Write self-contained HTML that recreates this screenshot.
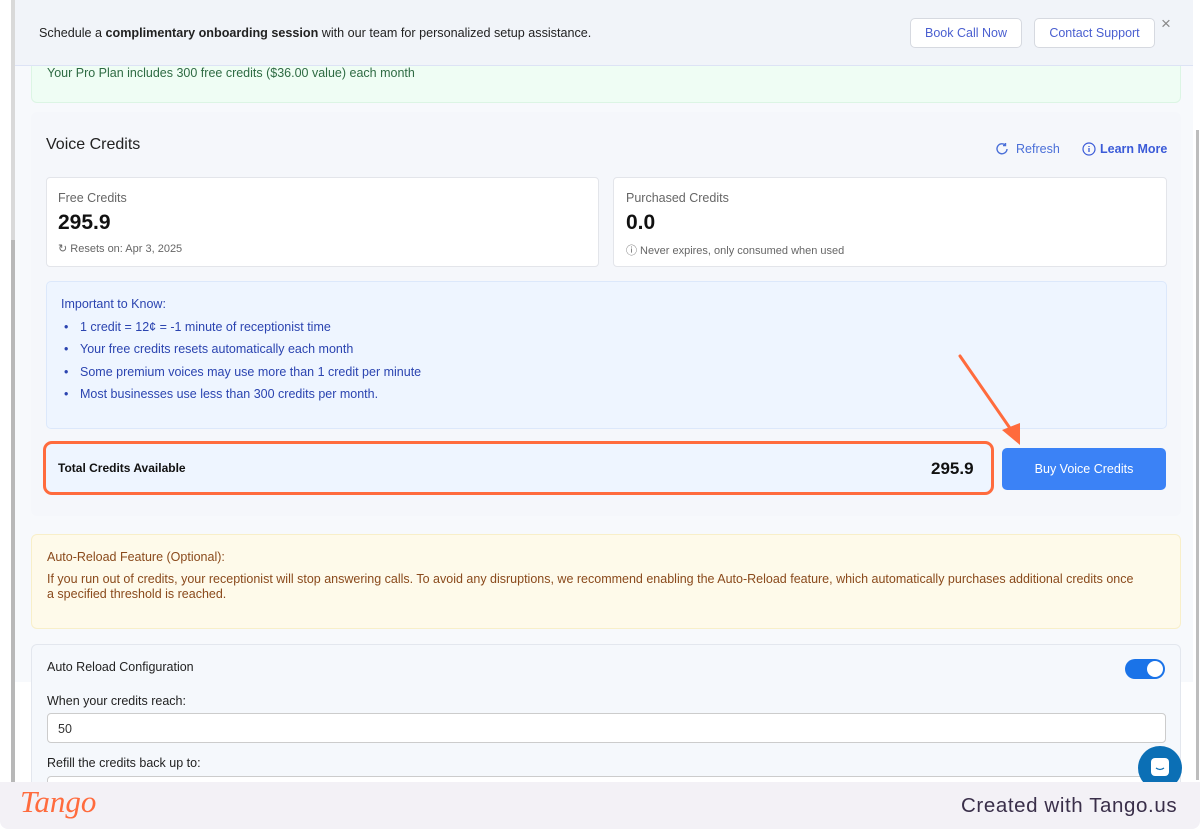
<!DOCTYPE html>
<html><head><meta charset="utf-8">
<style>
*{box-sizing:border-box;margin:0;padding:0}
body{width:1200px;height:829px;overflow:hidden;background:#fff;font-family:"Liberation Sans",sans-serif;position:relative}
.a{position:absolute}
.t{font-size:12.5px}
</style></head><body>
<div class="a" style="left:0;top:0;width:1200px;height:782px;background:#f7f9fc"></div>
<div class="a" style="left:0;top:0;width:11px;height:782px;background:#fff"></div>
<div class="a" style="left:11px;top:0;width:4px;height:782px;background:#d9d9d9"></div>
<div class="a" style="left:11px;top:240px;width:4px;height:542px;background:#b8b8b8"></div>
<div class="a" style="left:1193px;top:0;width:7px;height:782px;background:#fff"></div>
<div class="a" style="left:1196px;top:130px;width:3px;height:650px;background:#bdbdbd"></div>
<div class="a" style="left:15px;top:682px;width:1178px;height:100px;background:#fff"></div>

<div class="a" style="left:31px;top:50px;width:1150px;height:53px;background:#effdf4;border:1px solid #dcf5e4;border-radius:6px"></div>
<div class="a t" style="left:47px;top:66px;color:#2e6b43">Your Pro Plan includes 300 free credits ($36.00 value) each month</div>

<div class="a" style="left:15px;top:0;width:1178px;height:66px;background:#f1f4f9;border-bottom:1px solid #dde3f5"></div>
<div class="a" style="left:39px;top:26px;font-size:12.6px;color:#222">Schedule a <b>complimentary onboarding session</b> with our team for personalized setup assistance.</div>
<div class="a" style="left:910px;top:18px;width:112px;height:30px;background:#fff;border:1px solid #d6d9e0;border-radius:5px;font-size:12.5px;color:#4a5fd0;text-align:center;line-height:29px">Book Call Now</div>
<div class="a" style="left:1034px;top:18px;width:121px;height:30px;background:#fff;border:1px solid #d6d9e0;border-radius:5px;font-size:12.5px;color:#4a5fd0;text-align:center;line-height:29px">Contact Support</div>
<div class="a" style="left:1161px;top:14px;font-size:17px;color:#888">×</div>

<div class="a" style="left:31px;top:112px;width:1150px;height:404px;background:#f5f7fb;border-radius:6px"></div>
<div class="a" style="left:46px;top:136px;font-size:16px;color:#222">Voice Credits</div>
<svg class="a" style="left:995px;top:142px" width="14" height="14" viewBox="0 0 14 14"><path d="M12 7A5 5 0 1 1 10.5 3.2" fill="none" stroke="#4a6fd8" stroke-width="1.4"/><path d="M10.5 1v2.6H8" fill="none" stroke="#4a6fd8" stroke-width="1.4"/></svg>
<div class="a" style="left:1016px;top:142px;font-size:12.5px;color:#4a6fd8">Refresh</div>
<svg class="a" style="left:1082px;top:142px" width="14" height="14" viewBox="0 0 14 14"><circle cx="7" cy="7" r="6" fill="none" stroke="#3b5bd8" stroke-width="1.2"/><path d="M7 6v4M7 4v1" stroke="#3b5bd8" stroke-width="1.3"/></svg>
<div class="a" style="left:1100px;top:142px;font-size:12.5px;color:#3b5bd8;font-weight:bold">Learn More</div>

<div class="a" style="left:46px;top:177px;width:553px;height:90px;background:#fff;border:1px solid #e3e5ea;border-radius:4px"></div>
<div class="a t" style="left:58px;top:191px;color:#666">Free Credits</div>
<div class="a" style="left:58px;top:211px;font-size:21px;font-weight:bold;color:#111">295.9</div>
<div class="a" style="left:58px;top:242px;font-size:11px;color:#666">↻ Resets on: Apr 3, 2025</div>
<div class="a" style="left:613px;top:177px;width:554px;height:90px;background:#fff;border:1px solid #e3e5ea;border-radius:4px"></div>
<div class="a t" style="left:626px;top:191px;color:#666">Purchased Credits</div>
<div class="a" style="left:626px;top:211px;font-size:21px;font-weight:bold;color:#111">0.0</div>
<div class="a" style="left:626px;top:242px;font-size:11px;color:#666">ⓘ Never expires, only consumed when used</div>

<div class="a" style="left:46px;top:281px;width:1121px;height:148px;background:#eef5ff;border:1px solid #dce8fb;border-radius:5px"></div>
<div class="a" style="left:61px;top:297px;font-size:12.5px;color:#2b44b0">Important to Know:</div>
<div class="a t" style="left:64px;top:316px;color:#2b44b0;line-height:22.3px">
<div><span style="display:inline-block;width:16px">•</span>1 credit = 12¢ = -1 minute of receptionist time</div><div><span style="display:inline-block;width:16px">•</span>Your free credits resets automatically each month</div><div><span style="display:inline-block;width:16px">•</span>Some premium voices may use more than 1 credit per minute</div><div><span style="display:inline-block;width:16px">•</span>Most businesses use less than 300 credits per month.</div></div>

<div class="a" style="left:43px;top:441px;width:951px;height:54px;background:#eef5ff;border:3px solid #ff6b3d;border-radius:9px"></div>
<div class="a" style="left:58px;top:461px;font-size:12px;font-weight:bold;color:#111">Total Credits Available</div>
<div class="a" style="left:931px;top:459px;font-size:17px;font-weight:bold;color:#111">295.9</div>
<div class="a" style="left:1002px;top:448px;width:164px;height:42px;background:#3b82f6;border-radius:5px;color:#fff;font-size:12.5px;text-align:center;line-height:42px">Buy Voice Credits</div>
<svg class="a" style="left:950px;top:350px" width="80" height="100"><line x1="10" y1="6" x2="64" y2="84" stroke="#ff6b3d" stroke-width="3" stroke-linecap="round"/><polygon points="70,95 52,80 70,73" fill="#ff6b3d"/></svg>

<div class="a" style="left:31px;top:534px;width:1150px;height:95px;background:#fefaea;border:1px solid #f8efc9;border-radius:6px"></div>
<div class="a t" style="left:47px;top:550px;color:#8a4a1c">Auto-Reload Feature (Optional):</div>
<div class="a t" style="left:47px;top:572px;color:#8a4a1c;line-height:15px;width:1125px">If you run out of credits, your receptionist will stop answering calls. To avoid any disruptions, we recommend enabling the Auto-Reload feature, which automatically purchases additional credits once<br>a specified threshold is reached.</div>

<div class="a" style="left:31px;top:644px;width:1150px;height:160px;background:#f5f8fc;border:1px solid #e3e7ee;border-radius:6px"></div>
<div class="a t" style="left:47px;top:660px;color:#222">Auto Reload Configuration</div>
<div class="a" style="left:1125px;top:659px;width:40px;height:20px;background:#1a73e8;border-radius:10px"></div>
<div class="a" style="left:1147px;top:661px;width:16px;height:16px;background:#fff;border-radius:50%"></div>
<div class="a t" style="left:47px;top:694px;color:#222">When your credits reach:</div>
<div class="a" style="left:47px;top:713px;width:1119px;height:30px;background:#fff;border:1px solid #ccc;border-radius:4px"></div>
<div class="a t" style="left:58px;top:722px;color:#333">50</div>
<div class="a t" style="left:47px;top:756px;color:#222">Refill the credits back up to:</div>
<div class="a" style="left:47px;top:776px;width:1119px;height:30px;background:#fff;border:1px solid #ccc;border-radius:4px"></div>
<div class="a" style="left:1138px;top:746px;width:44px;height:44px;background:#0b6fb5;border-radius:50%"></div>
<svg class="a" style="left:1149px;top:756px" width="22" height="24"><rect x="2" y="2" width="18" height="18" rx="4" fill="#fff"/><path d="M7 12q4 3 8 0" stroke="#0b6fb5" fill="none" stroke-width="1.3"/></svg>

<div class="a" style="left:0;top:782px;width:1200px;height:47px;background:#f3f1f6;border-radius:0 0 8px 8px"></div>
<div class="a" style="left:20px;top:784px;font-family:'Liberation Serif',serif;font-style:italic;font-size:31px;color:#ff6b3d">Tango</div>
<div class="a" style="left:961px;top:794px;font-size:20.5px;color:#3a2f4a;letter-spacing:0.6px">Created with Tango.us</div>
</body></html>
